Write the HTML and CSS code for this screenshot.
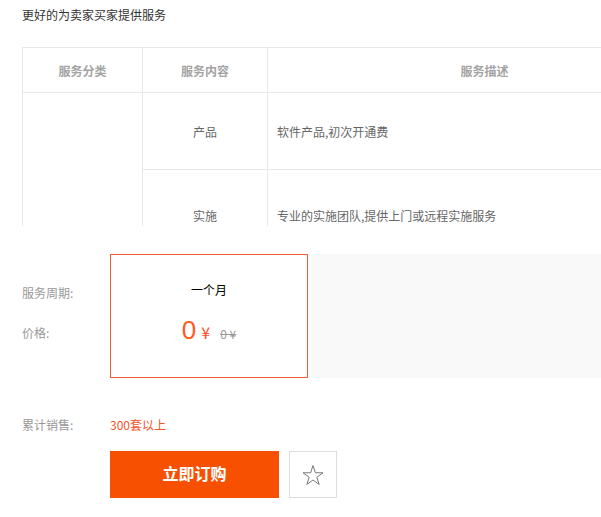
FILE: index.html
```html
<!DOCTYPE html>
<html lang="zh-CN">
<head>
<meta charset="utf-8">
<title>服务</title>
<link rel="stylesheet" href="styles.css">
</head>
<body>
<div class="page">
  <p class="intro">更好的为卖家买家提供服务</p>
  <div class="table-wrap">
    <table class="svc-table">
      <thead>
        <tr>
          <th class="c1">服务分类</th>
          <th class="c2">服务内容</th>
          <th class="c3">服务描述</th>
        </tr>
      </thead>
      <tbody>
        <tr class="r1">
          <td class="cat" rowspan="2"></td>
          <td class="item">产品</td>
          <td class="desc">软件产品,初次开通费</td>
        </tr>
        <tr class="r2">
          <td class="item">实施</td>
          <td class="desc">专业的实施团队,提供上门或远程实施服务</td>
        </tr>
      </tbody>
    </table>
  </div>

  <div class="spec">
    <div class="spec-labels">
      <div class="label">服务周期:</div>
      <div class="label label-price">价格:</div>
    </div>
    <div class="options">
      <div class="option selected">
        <div class="period">一个月</div>
        <div class="price">
          <span class="now">0</span><span class="cur">¥</span><span class="old">0 ¥</span>
        </div>
      </div>
    </div>
  </div>

  <div class="sales">
    <span class="label">累计销售:</span>
    <span class="sales-val">300套以上</span>
  </div>

  <div class="actions">
    <button class="buy">立即订购</button>
    <button class="fav" aria-label="收藏">
      <svg width="24" height="24" viewBox="0 0 24 24">
        <polygon points="12,2.5 14.36,9.76 21.99,9.76 15.81,14.24 18.17,21.49 12,17.01 5.83,21.49 8.19,14.24 2.01,9.76 9.64,9.76" fill="none" stroke="#777" stroke-width="1" stroke-linejoin="miter"/>
      </svg>
    </button>
  </div>
</div>
</body>
</html>
```

FILE: styles.css
```css
html, body {
  margin: 0;
  padding: 0;
  background: #fff;
  overflow: hidden;
}
body {
  font-family: "Noto Sans CJK SC", "Liberation Sans", sans-serif;
  font-size: 12px;
  color: #333;
}
.page {
  padding-left: 22px;
}
.intro {
  margin: 0;
  padding-top: 6px;
  line-height: 18px;
  color: #333;
}
.table-wrap {
  margin-top: 23px;
  height: 179px;
  overflow: hidden;
}
.svc-table {
  border-collapse: collapse;
  width: 680px;
  table-layout: fixed;
}
.svc-table th,
.svc-table td {
  border: 1px solid #e8e8e8;
  padding: 0;
}
.svc-table th {
  height: 44px;
  color: #a3a3a3;
  font-weight: bold;
  text-align: center;
}
.svc-table .c1 { width: 119px; }
.svc-table .c2 { width: 124px; }
.r1 td { height: 76px; }
.r2 td { height: 91px; }
.item {
  text-align: center;
  color: #666;
}
.desc {
  padding-left: 9px !important;
  color: #666;
}
.spec {
  margin-top: 28px;
  display: flex;
  height: 124px;
}
.spec-labels {
  width: 88px;
  padding-top: 29px;
}
.label {
  color: #999;
  line-height: 20px;
}
.label-price {
  margin-top: 20px;
}
.options {
  flex: 1;
  background: #f9f9f9;
  display: flex;
}
.option {
  width: 198px;
  box-sizing: border-box;
  background: #fff;
  border: 1px solid #f55a2c;
  display: flex;
  flex-direction: column;
  align-items: center;
}
.period {
  margin-top: 26px;
  line-height: 18px;
  color: #000;
}
.price {
  margin-top: 14px;
  display: flex;
  align-items: baseline;
  line-height: 34px;
}
.now {
  font-family: "Liberation Sans", sans-serif;
  font-size: 26px;
  color: #ff5a1e;
}
.cur {
  font-size: 16px;
  color: #ff4a2a;
  margin-left: 5px;
}
.old {
  margin-left: 10px;
  color: #999;
  font-size: 12px;
  text-decoration: line-through;
}
.sales {
  margin-top: 37px;
  display: flex;
  line-height: 20px;
}
.sales .label {
  width: 88px;
}
.sales-val {
  color: #f5542c;
}
.actions {
  margin-top: 16px;
  margin-left: 88px;
  display: flex;
  gap: 10px;
}
.buy {
  width: 169px;
  height: 47px;
  border: 0;
  background: #f75000;
  color: #fff;
  font-family: "Noto Sans CJK SC", sans-serif;
  font-size: 16px;
  font-weight: bold;
  padding: 0 0 3px;
}
.fav {
  width: 48px;
  height: 47px;
  box-sizing: border-box;
  border: 1px solid #ddd;
  background: #fff;
  padding: 0;
  display: flex;
  align-items: center;
  justify-content: center;
}
.fav svg {
  display: block;
}
```
